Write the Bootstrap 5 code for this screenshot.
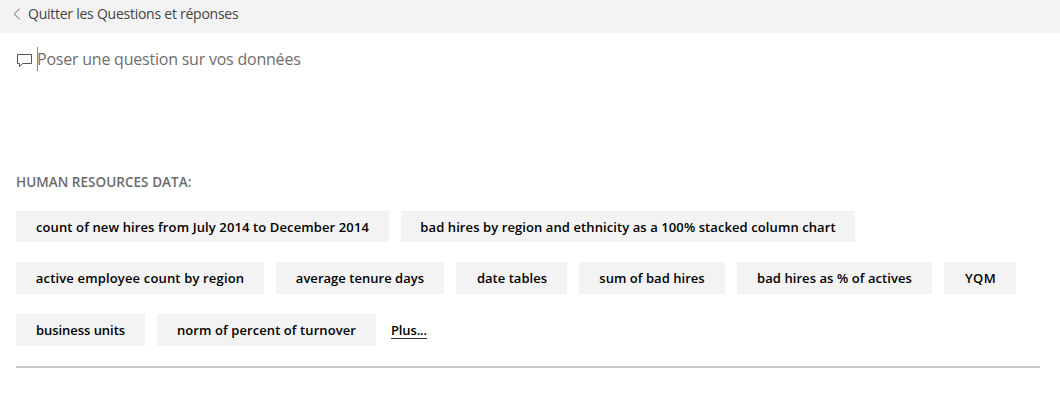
<!DOCTYPE html>
<html lang="fr">
<head>
<meta charset="utf-8">
<meta name="viewport" content="width=device-width, initial-scale=1">
<title>Questions et réponses</title>
<link href="https://cdn.jsdelivr.net/npm/bootstrap@5.3.0/dist/css/bootstrap.min.css" rel="stylesheet">
<style>
body{font-family:"Open Sans","Noto Sans",sans-serif;background:#fff;color:#000;overflow:hidden}
.topbar{height:33px;background:#f3f3f3;padding:0 0 6px 13px}
.exit-link{color:#444;font-size:14px;letter-spacing:-.25px;line-height:20px;gap:7px}
.ask{height:24px;margin:14px 0 0 16px}
.ask svg{margin-top:3px}
.ask-field{border-left:1px solid #888;margin-left:4px;color:#6e6e6e;font-size:16px;letter-spacing:-.22px;line-height:24px;white-space:nowrap;text-indent:-1px}
.suggestions{margin:101px 20px 0 16px}
.group-title{font-size:13.5px;font-weight:600;letter-spacing:.04px;line-height:20px;color:#6b6b6b;margin:0 0 19px}
.chips{gap:12px;margin-bottom:20px}
.chip{height:32px;background:#f3f3f3;border:0;border-radius:0;padding:0 0 1px;color:#000;font-size:13px;font-weight:600;line-height:20px;letter-spacing:var(--track,0);width:var(--w);white-space:nowrap}
.chip:hover{background:#e6e6e6}
.row-short .chip{height:31px;padding:1px 0 0}
.c-count{--w:373px;--track:.116px}.c-chart{--w:454px;--track:.09px}
.c-active{--w:248px;--track:.16px}.c-tenure{--w:168px;--track:.03px}
.c-dates{--w:111px;--track:.03px}.c-sum{--w:146px;--track:.04px}
.c-percent{--w:195px;--track:.07px}.c-yqm{--w:72px;--track:.35px}
.c-units{--w:129px;--track:-.05px}.c-norm{--w:219px;--track:.08px}
.c-dates,.c-yqm{padding-left:1px}
.more{color:#000;font-size:13px;font-weight:600;letter-spacing:-.13px;line-height:16px;margin-left:3px;border-bottom:1px solid #333}
.rule{height:2px;background:#c6c6c6}
</style>
</head>
<body>
<header class="topbar d-flex align-items-center">
  <a href="#" class="exit-link d-flex align-items-center text-decoration-none">
    <svg width="8" height="12" viewBox="0 0 8 12" fill="none" stroke="#666" stroke-width="1"><path d="M6.7 .8 1.2 6l5.5 5.2"/></svg>
    <span>Quitter les Questions et réponses</span>
  </a>
</header>
<main>
  <div class="ask d-flex align-items-center">
    <svg width="17" height="15" viewBox="0 0 17 15" fill="none" stroke="#555" stroke-width="1"><path d="M1.5 1.5h14v9H6.8l-3.3 3v-3h-2z"/></svg>
    <div class="ask-field">Poser une question sur vos données</div>
  </div>
  <section class="suggestions">
    <h2 class="group-title">HUMAN RESOURCES DATA:</h2>
    <div class="chips row-short d-flex">
      <button class="btn chip c-count">count of new hires from July 2014 to December 2014</button>
      <button class="btn chip c-chart">bad hires by region and ethnicity as a 100% stacked column chart</button>
    </div>
    <div class="chips d-flex">
      <button class="btn chip c-active">active employee count by region</button>
      <button class="btn chip c-tenure">average tenure days</button>
      <button class="btn chip c-dates">date tables</button>
      <button class="btn chip c-sum">sum of bad hires</button>
      <button class="btn chip c-percent">bad hires as % of actives</button>
      <button class="btn chip c-yqm">YQM</button>
    </div>
    <div class="chips d-flex align-items-center">
      <button class="btn chip c-units">business units</button>
      <button class="btn chip c-norm">norm of percent of turnover</button>
      <a href="#" class="more text-decoration-none">Plus...</a>
    </div>
    <div class="rule"></div>
  </section>
</main>
<script src="https://cdn.jsdelivr.net/npm/bootstrap@5.3.0/dist/js/bootstrap.bundle.min.js"></script>
</body>
</html>
